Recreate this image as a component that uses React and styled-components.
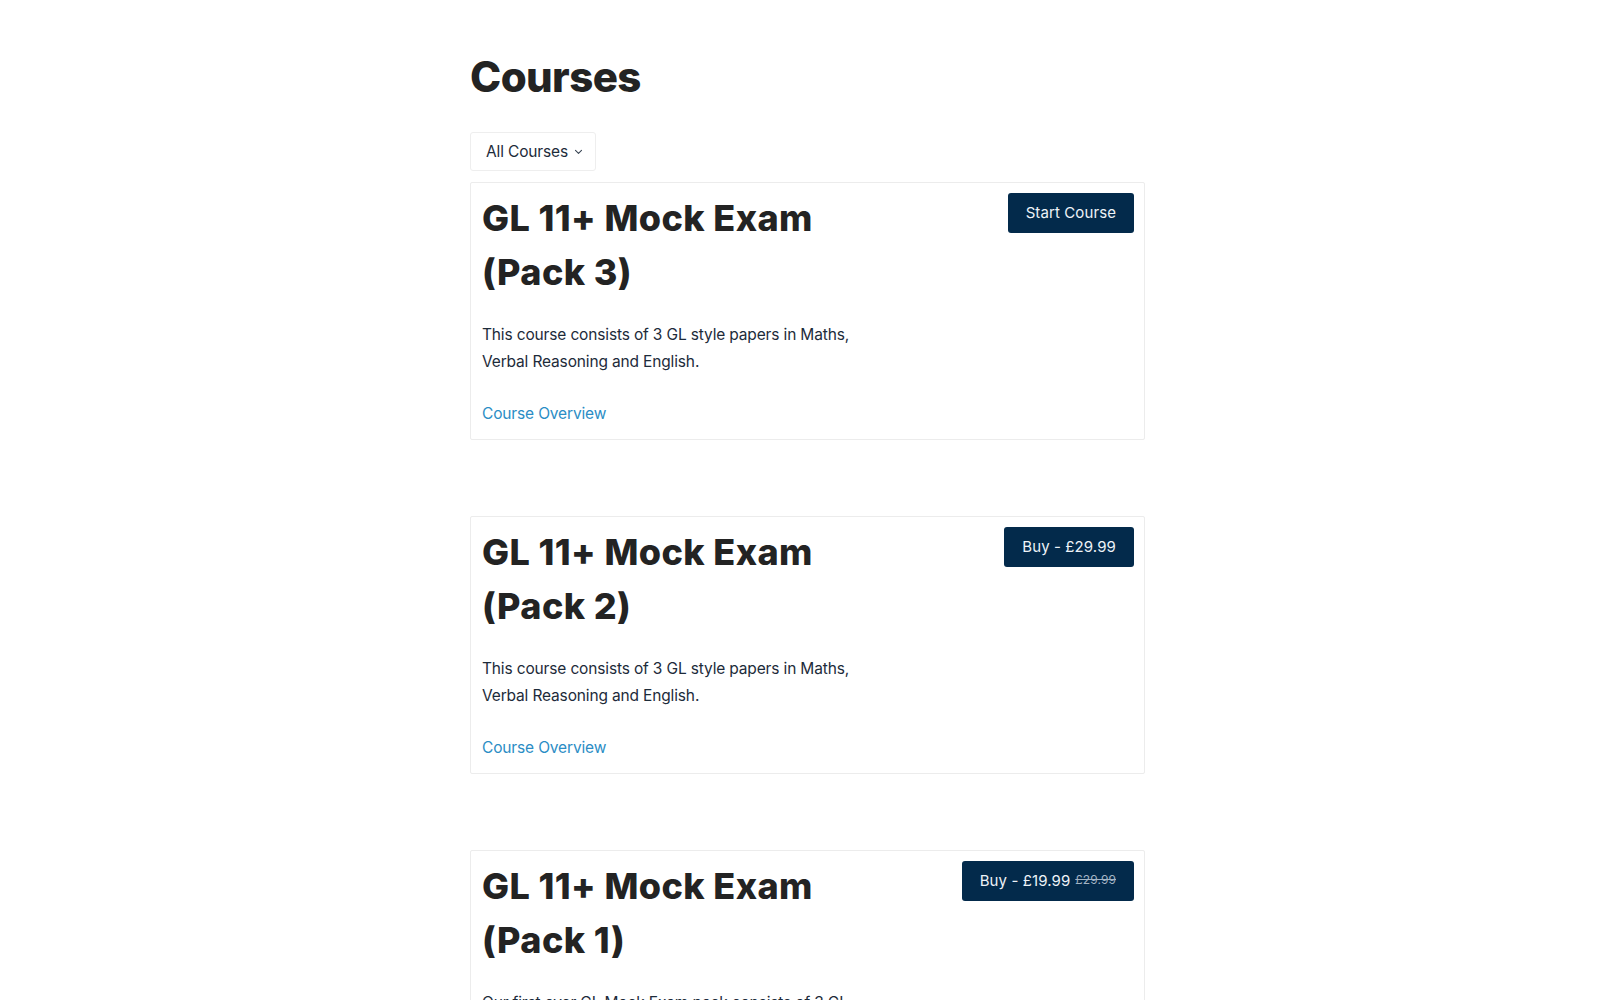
import React from 'react';
import styled, { createGlobalStyle } from 'styled-components';

const courses = [
    {
        id: 3,
        title: 'GL 11+ Mock Exam (Pack 3)',
        text: 'This course consists of 3 GL style papers in Maths, Verbal Reasoning and English.',
        action: 'Start Course',
    },
    {
        id: 2,
        title: 'GL 11+ Mock Exam (Pack 2)',
        text: 'This course consists of 3 GL style papers in Maths, Verbal Reasoning and English.',
        action: 'Buy - £29.99',
    },
    {
        id: 1,
        title: 'GL 11+ Mock Exam (Pack 1)',
        text: 'Our first ever GL Mock Exam pack consists of 3 GL style papers in Maths, Verbal Reasoning and English.',
        action: 'Buy - £19.99',
        oldPrice: '£29.99',
    },
];

const GlobalStyle = createGlobalStyle`
    html, body {
        margin: 0;
        padding: 0;
        background: #ffffff;
    }
    body {
        font-family: Inter, 'Noto Sans', sans-serif;
        color: #1d2b3a;
    }
    * {
        box-sizing: border-box;
    }
`;

const ChevronDown = () => (
    <svg width="9" height="6" viewBox="0 0 9 6" fill="none">
        <path d="M1.5 1.4L4.5 4.4L7.5 1.4" stroke="#3a4654" strokeWidth="1.1" strokeLinecap="round" strokeLinejoin="round" />
    </svg>
);

const CourseCard = ({ course }) => (
    <Card>
        <CardTop>
            <CardInfo>
                <CardTitle>{course.title}</CardTitle>
                <Description>{course.text}</Description>
                <OverviewLink href="#">Course Overview</OverviewLink>
            </CardInfo>
            <ActionButton>
                {course.action}
                {course.oldPrice && <OldPrice>{course.oldPrice}</OldPrice>}
            </ActionButton>
        </CardTop>
    </Card>
);

const App = () => {
    return (
        <>
            <GlobalStyle />
            <Page>
                <Heading>Courses</Heading>
                <Filter>
                    All Courses
                    <ChevronDown />
                </Filter>
                <CardList>
                    {courses.map(course => (
                        <CourseCard key={course.id} course={course} />
                    ))}
                </CardList>
            </Page>
        </>
    );
};

const Page = styled.div`
    width: 690px;
    margin: 0 auto;
    padding: 52px 0 40px 15px;
`;
const Heading = styled.h1`
    margin: 0 0 30px;
    font-family: Inter, sans-serif;
    font-weight: 800;
    font-size: 42px;
    line-height: 50px;
    color: #232323;
    letter-spacing: -0.6px;
`;
const Filter = styled.button`
    display: flex;
    align-items: center;
    gap: 6px;
    height: 39px;
    padding: 0 12px 0 15px;
    background: #ffffff;
    border: 1px solid #eeeeee;
    border-radius: 3px;
    font-family: Inter, sans-serif;
    font-size: 15.5px;
    letter-spacing: -0.15px;
    color: #1d2b3a;
    cursor: pointer;
`;
const CardList = styled.div`
    display: flex;
    flex-direction: column;
    gap: 76px;
    margin-top: 11px;
`;
const Card = styled.div`
    border: 1px solid #ececec;
    border-radius: 2px;
    padding: 8px 10px 12px 11px;
    background: #ffffff;
`;
const CardTop = styled.div`
    display: flex;
    justify-content: space-between;
    align-items: flex-start;
`;
const CardInfo = styled.div`
    width: 392px;
`;
const CardTitle = styled.h2`
    margin: 0 0 22px;
    font-family: Inter, sans-serif;
    font-weight: 800;
    font-size: 36px;
    line-height: 54px;
    color: #232323;
    letter-spacing: 0.4px;
`;
const Description = styled.p`
    margin: 0 0 25px;
    font-size: 15.5px;
    line-height: 27px;
    letter-spacing: -0.15px;
    color: #1d2b3a;
`;
const OverviewLink = styled.a`
    display: block;
    font-size: 15.5px;
    line-height: 27px;
    letter-spacing: -0.15px;
    color: #2b8dc5;
    text-decoration: none;
`;
const ActionButton = styled.button`
    display: flex;
    align-items: baseline;
    gap: 5px;
    height: 40px;
    margin-top: 2px;
    padding: 11px 18px 0;
    background: #032a4b;
    border: none;
    border-radius: 3px;
    font-family: Inter, sans-serif;
    font-size: 15px;
    line-height: 18px;
    letter-spacing: 0.1px;
    color: #eef3f8;
    white-space: nowrap;
    cursor: pointer;
`;
const OldPrice = styled.span`
    position: relative;
    top: -2px;
    font-size: 12px;
    color: #a3b4c5;
    text-decoration: line-through;
`;

export default App;
